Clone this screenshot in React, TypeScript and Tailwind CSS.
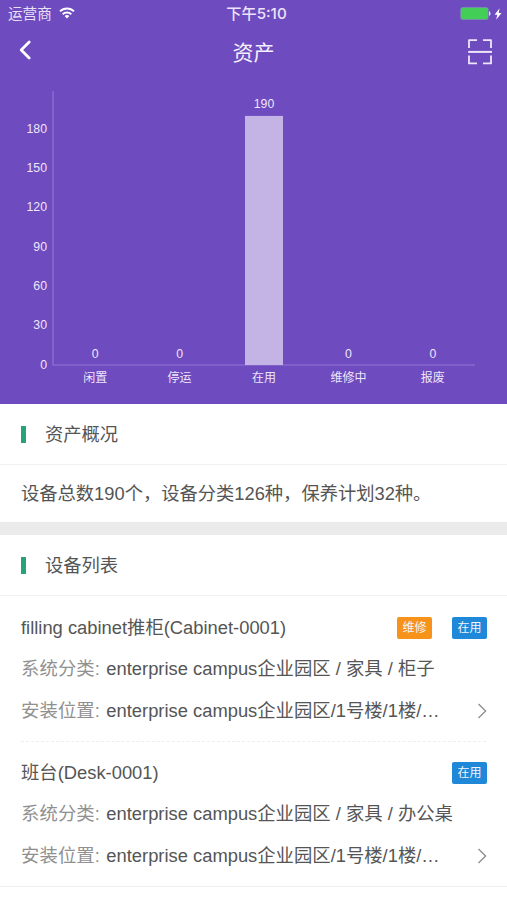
interface Stat {
  name: string;
  value: number;
}

interface Device {
  id: string;
  name: string;
  tags: string[];
  category: string;
  location: string;
}

const stats: Stat[] = [
  { name: '闲置', value: 0 },
  { name: '停运', value: 0 },
  { name: '在用', value: 190 },
  { name: '维修中', value: 0 },
  { name: '报废', value: 0 },
];

const devices: Device[] = [
  {
    id: '1',
    name: 'filling cabinet推柜(Cabinet-0001)',
    tags: ['维修', '在用'],
    category: 'enterprise campus企业园区 / 家具 / 柜子',
    location: 'enterprise campus企业园区/1号楼/1楼/…',
  },
  {
    id: '2',
    name: '班台(Desk-0001)',
    tags: ['在用'],
    category: 'enterprise campus企业园区 / 家具 / 办公桌',
    location: 'enterprise campus企业园区/1号楼/1楼/…',
  },
];

const tagColors: Record<string, string> = {
  维修: 'bg-[#f7921a]',
  在用: 'bg-[#1f88d9]',
};

function StatusBar() {
  return (
    <div className="grid h-[27px] grid-cols-3 items-center pr-[5px] pl-2 text-white">
      <div className="flex items-center gap-[7px] text-[14.6px] leading-none text-[#e9e0f8]">
        <span className="pt-[2px]">运营商</span>
        <svg className="mb-[2px] h-[12px] w-[16px]" viewBox="0 0 16 12" fill="none" stroke="#fff" strokeWidth="1.9">
          <path d="M1 4.4a10 10 0 0 1 14 0" />
          <path d="M3.7 7.2a6.2 6.2 0 0 1 8.6 0" />
          <path d="M8 11.6 5.6 9.1a3.5 3.5 0 0 1 4.8 0z" fill="#fff" stroke="none" />
        </svg>
      </div>
      <div className="pl-[3px] text-center font-['Inter','Noto_Sans_CJK_SC',sans-serif] text-[15.2px] leading-none font-medium whitespace-nowrap text-[#ece3fa]">
        下午5:10
      </div>
      <div className="flex items-center justify-end gap-[3px]">
        <svg className="h-[13px] w-[31px]" viewBox="0 0 31 13">
          <rect x="0.7" y="0.6" width="27.5" height="12" rx="2" fill="#43cf57" stroke="#8d8fc0" strokeWidth="0.6" />
          <path d="M29 4.3c2 .6 2 4 0 4.6z" fill="#e9e0f8" />
        </svg>
        <svg className="h-[12px] w-[8px]" viewBox="0 0 8 12" fill="#fff">
          <path d="M5.6 0.2 0.6 6.7h2.7L2.2 11.8 7.5 5.1H4.6z" />
        </svg>
      </div>
    </div>
  );
}

function NavBar() {
  return (
    <div className="grid h-[50px] grid-cols-3 items-center px-[14px] text-white">
      <svg className="ml-[4px] h-[22px] w-[16px] -translate-y-[2px]" viewBox="0 0 16 22" fill="none" stroke="#fff" strokeWidth="2.8" strokeLinecap="round" strokeLinejoin="round">
        <path d="M11.2 3 3.2 11l8 8" />
      </svg>
      <h1 className="text-center text-[21px] leading-none text-[#f6f1ff]">资产</h1>
      <svg className="h-[26px] w-[26px] justify-self-end" viewBox="0 0 26 26" fill="none" stroke="#eee6fb" strokeWidth="1.8" strokeLinejoin="round">
        <path d="M2 9V1.2h8M16 1.2h8V9M24 16.5v7.9h-8M10 24.4H2v-7.9" />
        <path d="M1.2 12.9h23.8" strokeWidth="2" />
      </svg>
    </div>
  );
}

function AssetChart() {
  const left = 53;
  const bottom = 288;
  const scale = 1.311;
  const step = 84.4;
  const ticks = [0, 30, 60, 90, 120, 150, 180];

  return (
    <svg className="block h-[327px] w-[507px]" viewBox="0 0 507 327" fontSize="12.3" fill="#eee6fb">
      <path d={`M${left} 14V${bottom}H475`} fill="none" stroke="#9478d3" strokeWidth="1.1" />
      {ticks.map((t) => (
        <text key={t} x={left - 6} y={bottom + 3.7 - t * scale} textAnchor="end">
          {t}
        </text>
      ))}
      {stats.map((s, i) => {
        const x = left + step * (i + 0.5);
        const h = s.value * scale;
        return (
          <g key={s.name} textAnchor="middle">
            {h > 0 && <rect x={x - 19} y={bottom - h} width="38" height={h} fill="#c4b3e5" />}
            <text x={x} y={bottom - h - 7.5}>{s.value}</text>
            <text x={x} y={bottom + 17} fontSize="12">{s.name}</text>
          </g>
        );
      })}
    </svg>
  );
}

function SectionTitle({ title }: { title: string }) {
  return (
    <div className="flex h-[61px] items-center border-b border-[#f1f1f1] pl-[21px]">
      <span className="h-[17px] w-[5px] bg-[#27a27b]" />
      <h2 className="ml-[19px] pt-[2px] text-[18.3px] leading-none">{title}</h2>
    </div>
  );
}

function DeviceItem({ device }: { device: Device }) {
  return (
    <div className="pt-[10.5px] pb-[9.3px] leading-[40.5px] whitespace-nowrap">
      <div className="flex h-[41.5px] items-center justify-between">
        <h3>{device.name}</h3>
        <div className="-mr-[1px] flex gap-[20px]">
          {device.tags.map((tag) => (
            <span key={tag} className={`h-[22px] w-[35px] rounded-[2px] text-center text-[12px] leading-[22px] text-[#f1f6fb] ${tagColors[tag]}`}>
              {tag}
            </span>
          ))}
        </div>
      </div>
      <p className="h-[41.5px]">
        <span className="mr-[1.2px] tracking-[0.1px] text-[#909090]">系统分类: </span>
        {device.category}
      </p>
      <div className="flex h-[41.5px] items-center justify-between">
        <p>
          <span className="mr-[1.2px] tracking-[0.1px] text-[#909090]">安装位置: </span>
          {device.location}
        </p>
        <svg className="-mr-[1px] h-[16px] w-[10px]" viewBox="0 0 10 16" fill="none" stroke="#8c8c8c" strokeWidth="1.3">
          <path d="M1.5 1 8.6 8 1.5 15" />
        </svg>
      </div>
    </div>
  );
}

export default function App() {
  return (
    <div className="h-[900px] w-[507px] overflow-hidden bg-white font-['Liberation_Sans','Noto_Sans_CJK_SC',sans-serif] text-[18.35px] text-[#555]">
      <header className="h-[404px] bg-[#6e4bbe]">
        <StatusBar />
        <NavBar />
        <AssetChart />
      </header>

      <section>
        <SectionTitle title="资产概况" />
        <p className="h-[57px] pl-[21px] text-[18.3px] leading-[57px] whitespace-nowrap">
          设备总数190个，设备分类126种，保养计划32种。
        </p>
      </section>

      <section className="border-t-[13px] border-[#ebebeb]">
        <SectionTitle title="设备列表" />
        <div className="divide-y divide-dashed divide-[#eee] px-[21px] pt-[0.7px]">
          {devices.map((d) => (
            <DeviceItem key={d.id} device={d} />
          ))}
        </div>
        <div className="border-t border-[#eee]" />
      </section>
    </div>
  );
}
